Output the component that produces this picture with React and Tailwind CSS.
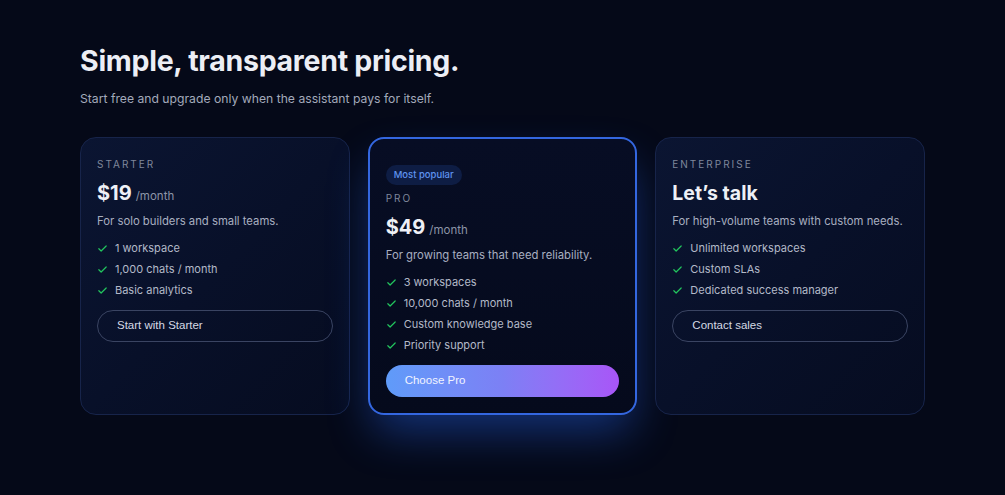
import React from 'react';

const plans = [
    {
        id: 'starter',
        label: 'Starter',
        price: '$19',
        desc: 'For solo builders and small teams.',
        features: ['1 workspace', '1,000 chats / month', 'Basic analytics'],
        cta: 'Start with Starter',
    },
    {
        id: 'pro',
        label: 'Pro',
        price: '$49',
        desc: 'For growing teams that need reliability.',
        features: ['3 workspaces', '10,000 chats / month', 'Custom knowledge base', 'Priority support'],
        cta: 'Choose Pro',
        featured: true,
    },
    {
        id: 'enterprise',
        label: 'Enterprise',
        title: 'Let\u2019s talk',
        desc: 'For high-volume teams with custom needs.',
        features: ['Unlimited workspaces', 'Custom SLAs', 'Dedicated success manager'],
        cta: 'Contact sales',
    },
];

function Check() {
    return (
        <svg className="w-[11px] h-[11px] shrink-0 text-[#22c55e]" fill="none" stroke="currentColor" strokeWidth="2.6" viewBox="0 0 24 24">
            <path strokeLinecap="round" strokeLinejoin="round" d="M4 12.5l5 5L20 6.5" />
        </svg>
    );
}

function PlanCard({ plan }) {
    const featured = plan.featured;
    return (
        <div
            className={
                featured
                    ? 'flex flex-col rounded-[16px] border-2 border-[#3467e0] bg-gradient-to-b from-[#070d24] to-[#050a1c] px-4 pt-[26px] pb-4 shadow-[0_22px_45px_-6px_rgba(37,99,235,0.45)]'
                    : 'flex flex-col rounded-[16px] border border-[#17244a] bg-gradient-to-br from-[#0b1532] via-[#081029] to-[#060c20] px-4 pt-[18px] pb-4'
            }
        >
            {featured && (
                <span className="self-start rounded-full bg-[#0e1d44] px-2 py-[5px] text-[9.5px] leading-[10px] font-medium text-[#5f93f0] mb-[5px]">
                    Most popular
                </span>
            )}
            <div className="text-[10px] leading-4 uppercase tracking-[0.2em] text-[#7f879b]">{plan.label}</div>
            <div className="mt-[7px] flex h-[31px] items-baseline gap-1 leading-7">
                {plan.title ? (
                    <span className="text-[19.5px] font-bold text-[#eef0f6]">{plan.title}</span>
                ) : (
                    <>
                        <span className="text-[20px] font-bold text-[#eef0f6]">{plan.price}</span>
                        <span className="text-[11.5px] text-[#8d95a8]">/month</span>
                    </>
                )}
            </div>
            <p className="mt-[1px] text-[11.3px] leading-5 text-[#a8afc0]">{plan.desc}</p>
            <ul className="mt-[7px] flex flex-col">
                {plan.features.map((f) => (
                    <li key={f} className="flex items-center gap-[7px] text-[11px] leading-[21px] text-[#b3b9c8]">
                        <Check />
                        {f}
                    </li>
                ))}
            </ul>
            <button
                className={
                    featured
                        ? 'mt-[9px] h-8 w-full rounded-full bg-gradient-to-r from-[#5f9bf9] via-[#7c80f5] to-[#a855f7] pl-[19px] text-left text-[11.5px] text-[#f2f4ff] font-["Liberation_Sans",Arial,sans-serif]'
                        : 'mt-[9px] h-8 w-full rounded-full border border-[#3a4462] pl-[19px] text-left text-[11.5px] text-[#d5d9e4] font-["Liberation_Sans",Arial,sans-serif]'
                }
            >
                {plan.cta}
            </button>
        </div>
    );
}

export default function App() {
    return (
        <div className="min-h-[495px] w-full bg-[#050918] font-['Inter','Noto_Sans',sans-serif] px-20 pt-[41px]">
            <h1 className="text-[28.5px] leading-10 font-bold tracking-[-0.01em] text-[#eceef5]">Simple, transparent pricing.</h1>
            <p className="mt-[8px] text-[12.2px] leading-5 text-[#a3aabb]">Start free and upgrade only when the assistant pays for itself.</p>
            <div className="mt-[28px] grid grid-cols-3 gap-[18px]">
                {plans.map((p) => (
                    <PlanCard key={p.id} plan={p} />
                ))}
            </div>
        </div>
    );
}
